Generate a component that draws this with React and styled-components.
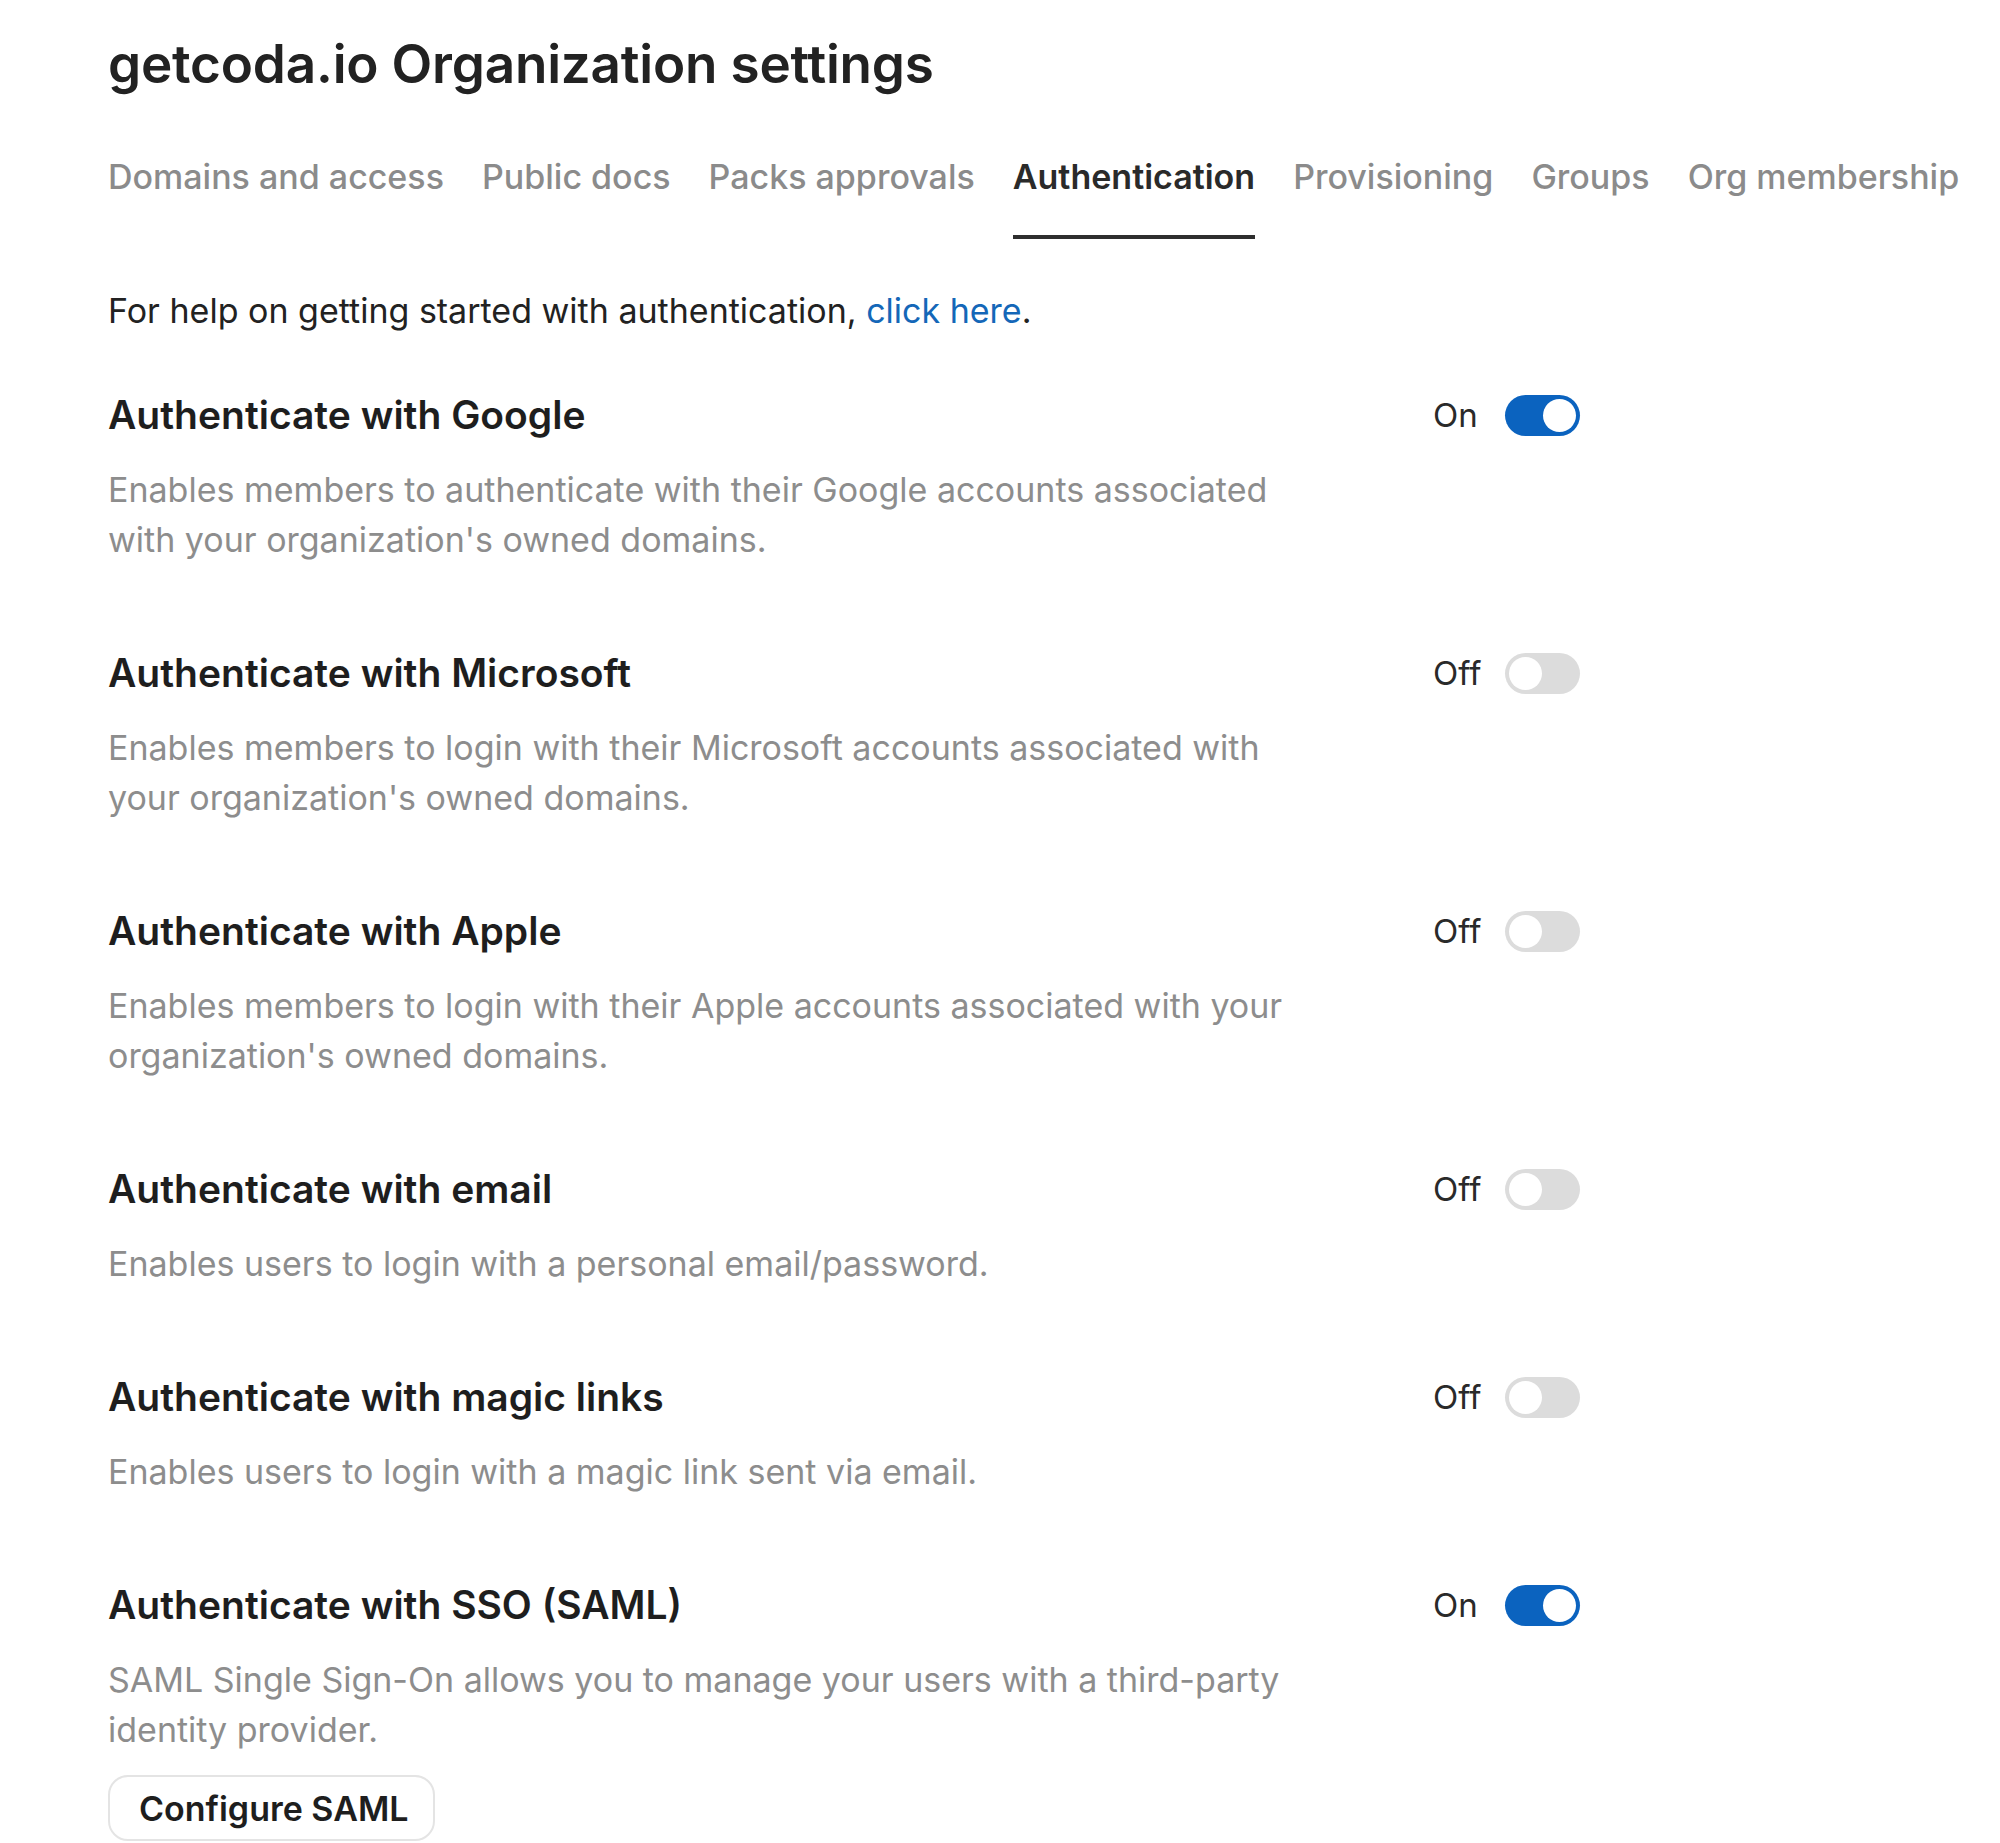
import React from "react";
import styled, { createGlobalStyle } from "styled-components";

const Global = createGlobalStyle`
  html, body { margin: 0; padding: 0; background: #ffffff; }
  body { font-family: Inter, "Noto Sans", sans-serif; color: #1f1f1f; }
  * { box-sizing: border-box; }
`;

const Page = styled.div`
  padding: 34px 0 0 108px;
  width: 2000px;
  height: 1843px;
  overflow: hidden;
`;

const Title = styled.h1`
  margin: 0;
  font-size: 53px;
  line-height: 60px;
  font-weight: 600;
  color: #222;
  letter-spacing: -0.2px;
`;

const Tabs = styled.nav`
  display: flex;
  gap: 38px;
  margin-top: 58px;
`;

const Tab = styled.div`
  font-size: 34px;
  line-height: 50px;
  font-weight: ${(p) => (p.$active ? 600 : 500)};
  color: ${(p) => (p.$active ? "#2a2a2a" : "#8b8b8b")};
  padding-bottom: 33px;
  border-bottom: 4px solid ${(p) => (p.$active ? "#2e2e2e" : "transparent")};
  white-space: nowrap;
`;

const Help = styled.p`
  margin: 47px 0 0;
  font-size: 34px;
  line-height: 50px;
  color: #222;
`;

const Link = styled.a`
  color: #1467b8;
  text-decoration: none;
`;

const Sections = styled.div`
  width: 1472px;
  margin-top: 54px;
  display: flex;
  flex-direction: column;
  gap: 83px;
`;

const Section = styled.section`
  display: flex;
  flex-direction: column;
`;

const Header = styled.div`
  display: flex;
  align-items: center;
  justify-content: space-between;
  height: 50px;
`;

const SectionTitle = styled.h2`
  margin: 0;
  font-size: 39px;
  line-height: 50px;
  font-weight: 600;
  color: #1e1e1e;
`;

const Desc = styled.p`
  margin: 25px 0 0;
  max-width: 1210px;
  font-size: 34px;
  line-height: 50px;
  color: #8d8d8d;
`;

const ToggleGroup = styled.div`
  display: grid;
  grid-template-columns: 48px 75px;
  column-gap: 24px;
  align-items: center;
`;

const ToggleLabel = styled.span`
  font-size: 33px;
  line-height: 50px;
  color: #2a2a2a;
`;

const Switch = styled.div`
  position: relative;
  width: 75px;
  height: 41px;
  border-radius: 21px;
  background: ${(p) => (p.$on ? "#0b63bf" : "#dcdcdc")};
`;

const Knob = styled.span`
  position: absolute;
  top: 4px;
  left: ${(p) => (p.$on ? "38px" : "4px")};
  width: 33px;
  height: 33px;
  border-radius: 50%;
  background: #ffffff;
`;

const Button = styled.button`
  margin-top: 20px;
  align-self: flex-start;
  width: 327px;
  height: 66px;
  border: 2px solid #e4e4e4;
  border-radius: 20px;
  background: #fff;
  font-family: inherit;
  font-size: 34px;
  font-weight: 600;
  color: #1e1e1e;
  text-align: left;
  padding: 0 0 0 29px;
`;

const tabs = [
  "Domains and access",
  "Public docs",
  "Packs approvals",
  "Authentication",
  "Provisioning",
  "Groups",
  "Org membership",
];

const sections = [
  {
    title: "Authenticate with Google",
    on: true,
    desc: "Enables members to authenticate with their Google accounts associated with your organization's owned domains.",
  },
  {
    title: "Authenticate with Microsoft",
    on: false,
    desc: "Enables members to login with their Microsoft accounts associated with your organization's owned domains.",
  },
  {
    title: "Authenticate with Apple",
    on: false,
    desc: "Enables members to login with their Apple accounts associated with your organization's owned domains.",
  },
  {
    title: "Authenticate with email",
    on: false,
    desc: "Enables users to login with a personal email/password.",
  },
  {
    title: "Authenticate with magic links",
    on: false,
    desc: "Enables users to login with a magic link sent via email.",
  },
  {
    title: "Authenticate with SSO (SAML)",
    on: true,
    desc: "SAML Single Sign-On allows you to manage your users with a third-party identity provider.",
    button: "Configure SAML",
  },
];

export default function App() {
  return (
    <Page>
      <Global />
      <Title>getcoda.io Organization settings</Title>
      <Tabs>
        {tabs.map((t) => (
          <Tab key={t} $active={t === "Authentication"}>
            {t}
          </Tab>
        ))}
      </Tabs>
      <Help>
        For help on getting started with authentication, <Link href="#">click here</Link>.
      </Help>
      <Sections>
        {sections.map((s) => (
          <Section key={s.title}>
            <Header>
              <SectionTitle>{s.title}</SectionTitle>
              <ToggleGroup>
                <ToggleLabel>{s.on ? "On" : "Off"}</ToggleLabel>
                <Switch $on={s.on}>
                  <Knob $on={s.on} />
                </Switch>
              </ToggleGroup>
            </Header>
            <Desc>{s.desc}</Desc>
            {s.button && <Button>{s.button}</Button>}
          </Section>
        ))}
      </Sections>
    </Page>
  );
}
